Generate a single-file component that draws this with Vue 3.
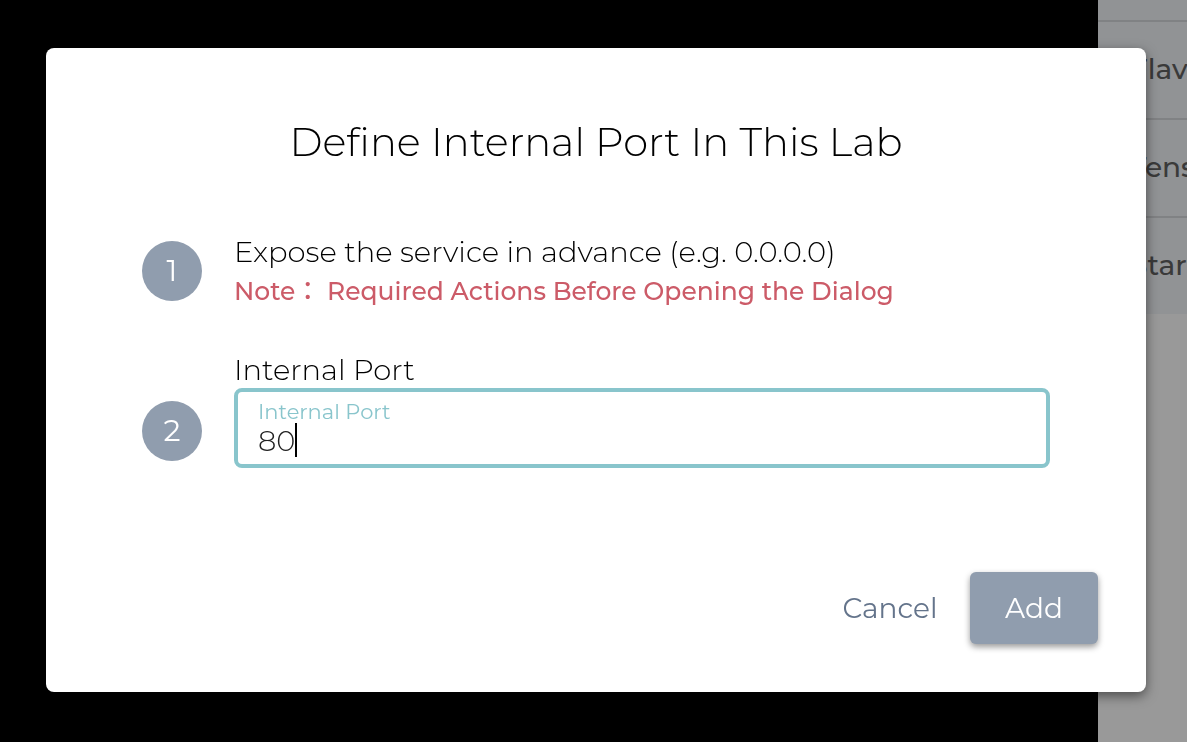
<script setup>
import { ref } from 'vue'

const port = ref('80')
const details = ['', 'Flavor', 'Tensor', 'Start']
</script>

<template>
  <div class="page">
    <main class="terminal"></main>
    <aside class="side">
      <ul class="details">
        <li v-for="(item, i) in details" :key="i">{{ item }}</li>
      </ul>
    </aside>

    <div class="overlay">
      <form class="dialog" role="dialog" aria-labelledby="title" @submit.prevent>
        <h1 id="title">Define Internal Port In This Lab</h1>

        <ol class="steps">
          <li class="step">
            <span class="badge">1</span>
            <div class="body">
              <p class="text">Expose the service in advance (e.g. 0.0.0.0)</p>
              <p class="note">Note：&nbsp;Required Actions Before Opening the Dialog</p>
            </div>
          </li>
          <li class="step second">
            <span class="badge">2</span>
            <div class="body">
              <p class="text">Internal Port</p>
              <div class="field">
                <label for="port">Internal Port</label>
                <div class="entry">
                  <input id="port" v-model="port" type="text" autocomplete="off" />
                  <span class="caret"></span>
                </div>
              </div>
            </div>
          </li>
        </ol>

        <div class="actions">
          <button type="button" class="cancel">Cancel</button>
          <button type="submit" class="add">Add</button>
        </div>
      </form>
    </div>
  </div>
</template>

<style>
body {
  background: #000;
}
</style>

<style scoped>
.page {
  display: flex;
  min-height: 100vh;
  overflow: hidden;
  font-family: Montserrat, "Noto Sans CJK TC", sans-serif;
  font-weight: 300;
  font-size: 29px;
  color: #000;
}
.page * {
  box-sizing: border-box;
}
h1, p, ul, ol {
  margin: 0;
  padding: 0;
  font-weight: 300;
}
ul, ol {
  list-style: none;
}
.terminal {
  flex: 1;
  background: #000;
}
.side {
  width: 89px;
  overflow: hidden;
  background: #999;
}
.details li {
  height: 98px;
  padding-left: 32px;
  border-top: 2px solid #808284;
  background: #919395;
  color: #3a3a3a;
  font-size: 28px;
  font-weight: 500;
  line-height: 94px;
  white-space: nowrap;
}
.details li:first-child {
  height: 20px;
  border-top: 0;
}
.overlay {
  position: fixed;
  inset: 0;
  display: flex;
  align-items: flex-start;
  padding: 48px 41px 48px 46px;
}
.dialog {
  flex: 1;
  padding: 64px 48px 48px;
  border-radius: 8px;
  background: #fff;
  box-shadow: 0 4px 12px rgba(0, 0, 0, 0.5);
}
h1 {
  font-size: 40px;
  line-height: 60px;
  text-align: center;
}
.steps {
  padding: 60px 48px 0;
}
.step {
  display: flex;
  align-items: center;
  gap: 32px;
}
.badge {
  flex: none;
  width: 60px;
  height: 60px;
  border-radius: 50%;
  background: #909dae;
  color: #fff;
  font-size: 30px;
  font-weight: 400;
  line-height: 60px;
  text-align: center;
}
.body {
  flex: 1;
}
.text {
  line-height: 40px;
}
.note {
  color: #cc5b68;
  font-size: 25px;
  font-weight: 500;
  line-height: 38px;
}
.second {
  margin-top: 42px;
}
.second .body {
  padding-bottom: 42px;
}
.second .text {
  line-height: 36px;
}
.field {
  height: 80px;
  padding: 8px 20px;
  border: 4px solid #89c5cc;
  border-radius: 8px;
}
.field label {
  display: block;
  color: #89c5cc;
  font-size: 21px;
  font-weight: 400;
  line-height: 24px;
}
.entry {
  display: flex;
  align-items: center;
  height: 32px;
}
.entry input {
  field-sizing: content;
  max-width: 100%;
  height: 32px;
  padding: 0;
  border: 0;
  outline: 0;
  background: transparent;
  caret-color: transparent;
  color: #222;
  font: inherit;
}
.caret {
  flex: none;
  width: 2px;
  height: 34px;
  background: #000;
}
.actions {
  display: flex;
  justify-content: flex-end;
  gap: 16px;
  margin-top: 62px;
}
.actions button {
  width: 128px;
  height: 72px;
  padding: 0;
  border: 0;
  border-radius: 6px;
  font: inherit;
  font-size: 28px;
  font-weight: 400;
  cursor: pointer;
}
.actions .cancel {
  background: transparent;
  color: #64748b;
}
.actions .add {
  background: #909dae;
  color: #fff;
  box-shadow: 0 3px 6px rgba(0, 0, 0, 0.4);
}
</style>
